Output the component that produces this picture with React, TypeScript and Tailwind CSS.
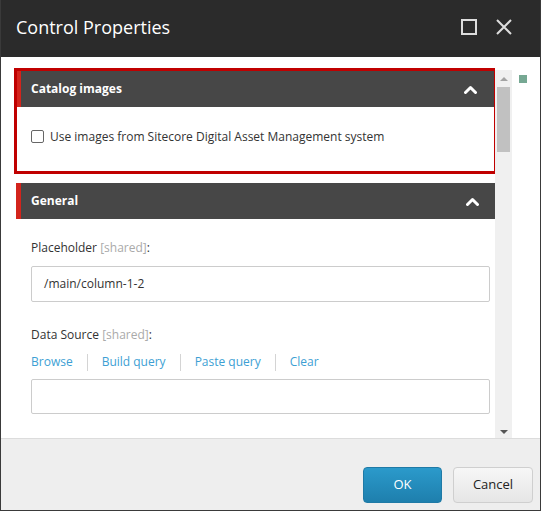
import { useState } from 'react';

const font = { fontFamily: '"Open Sans", "Noto Sans", sans-serif' };

function PanelHeader({ title, narrow }: { title: string; narrow?: boolean }) {
  return (
    <div
      className={
        'flex h-9 items-center justify-between bg-[#474747] border-[#d3241c] pl-[10px] pr-[17px] ' +
        (narrow ? 'border-l-4' : 'border-l-[5px]')
      }
    >
      <span className="text-[12px] font-bold text-white">{title}</span>
      <svg width="13" height="9" viewBox="0 0 13 9" className="mt-[1px]">
        <path d="M1.5 7.5 L6.5 2.5 L11.5 7.5" fill="none" stroke="#fff" strokeWidth="3" strokeLinecap="round" strokeLinejoin="round" />
      </svg>
    </div>
  );
}

function Label({ name }: { name: string }) {
  return (
    <div className="text-[12px] text-[#333]">
      {name} <span className="text-[#aaa]">[shared]</span>:
    </div>
  );
}

const links = ['Browse', 'Build query', 'Paste query', 'Clear'];

export default function App() {
  const [useDam, setUseDam] = useState(false);

  return (
    <div style={font} className="flex h-[511px] w-[541px] flex-col overflow-hidden border-x border-b border-[#3a3a3a] bg-white">
      {/* title bar */}
      <div className="flex h-[57px] shrink-0 items-center justify-between bg-[#2b2b2b] pb-[3px] pl-[15px] pr-[28px]">
        <span className="text-[18px] text-white">Control Properties</span>
        <div className="flex items-center gap-[19px]">
          <svg width="16" height="16" viewBox="0 0 16 16">
            <rect x="1" y="1" width="14" height="14" fill="none" stroke="#ddd" strokeWidth="2" />
          </svg>
          <svg width="16" height="16" viewBox="0 0 16 16">
            <path d="M1 1 L15 15 M15 1 L1 15" stroke="#ddd" strokeWidth="2" />
          </svg>
        </div>
      </div>

      {/* body */}
      <div className="flex min-h-0 flex-1 pt-[11px] pl-[13px]">
        <div className="flex w-[481px] flex-col gap-[9px] overflow-hidden">
          <div className="relative z-10 mr-[-2px] border-[3px] border-[#c00000]">
            <PanelHeader title="Catalog images" narrow />
            <label className="flex h-16 items-center gap-[6px] pb-[5px] pl-[14px] text-[12px] text-[#333]">
              <input
                type="checkbox"
                checked={useDam}
                onChange={(e) => setUseDam(e.target.checked)}
                className="h-[13px] w-[13px] appearance-none rounded-[2px] border border-[#666] bg-white"
              />
              Use images from Sitecore Digital Asset Management system
            </label>
          </div>

          <div className="ml-[2px] mr-[-1px]">
            <PanelHeader title="General" />
            <div className="pl-[15px] pr-[6px] pt-[20px]">
              <Label name="Placeholder" />
              <div className="mt-[9px] flex h-[36px] items-center rounded-[2px] border border-[#ccc] px-[12px] text-[12px] text-[#333]">
                /main/column-1-2
              </div>
              <div className="mt-[24px]">
                <Label name="Data Source" />
              </div>
              <div className="mt-[9px] flex items-center text-[12px] text-[#3d9fd4]">
                {links.map((l, i) => (
                  <div key={l} className="flex items-center">
                    {i > 0 && <span className="mx-[14px] h-[17px] w-px bg-[#d4d4d4]" />}
                    <span>{l}</span>
                  </div>
                ))}
              </div>
              <div className="mt-[8px] h-[35px] rounded-[2px] border border-[#ccc]" />
            </div>
          </div>
        </div>

        {/* scrollbar */}
        <div className="mt-[2px] flex h-[371px] w-[17px] flex-col items-center bg-[#f0f0f0]">
          <div className="mt-[7px] h-0 w-0 border-x-[4px] border-b-[4px] border-x-transparent border-b-[#a3a3a3]" />
          <div className="mt-[6px] ml-[2px] h-[65px] w-[13px] self-start bg-[#c1c1c1]" />
          <div className="flex-1" />
          <div className="mb-[7px] h-0 w-0 border-x-[4px] border-t-[4px] border-x-transparent border-t-[#555]" />
        </div>

        <div className="ml-[7px] mt-[7px] h-[8px] w-[8px] bg-[#76a893]" />
      </div>

      {/* footer */}
      <div className="flex h-[72px] shrink-0 items-start justify-end gap-[11px] border-t border-[#dcdcdc] bg-[#eeeeee] pr-[7px] pt-[28px]">
        <button className="h-[36px] w-[79px] rounded-[4px] border border-[#1f7aa6] bg-gradient-to-b from-[#2b9acb] to-[#1e7fad] text-[13px] text-white">
          OK
        </button>
        <button className="h-[36px] w-[80px] rounded-[4px] border border-[#cfcfcf] bg-gradient-to-b from-[#f7f7f7] to-[#e6e6e6] text-[13px] text-[#222]">
          Cancel
        </button>
      </div>
    </div>
  );
}
